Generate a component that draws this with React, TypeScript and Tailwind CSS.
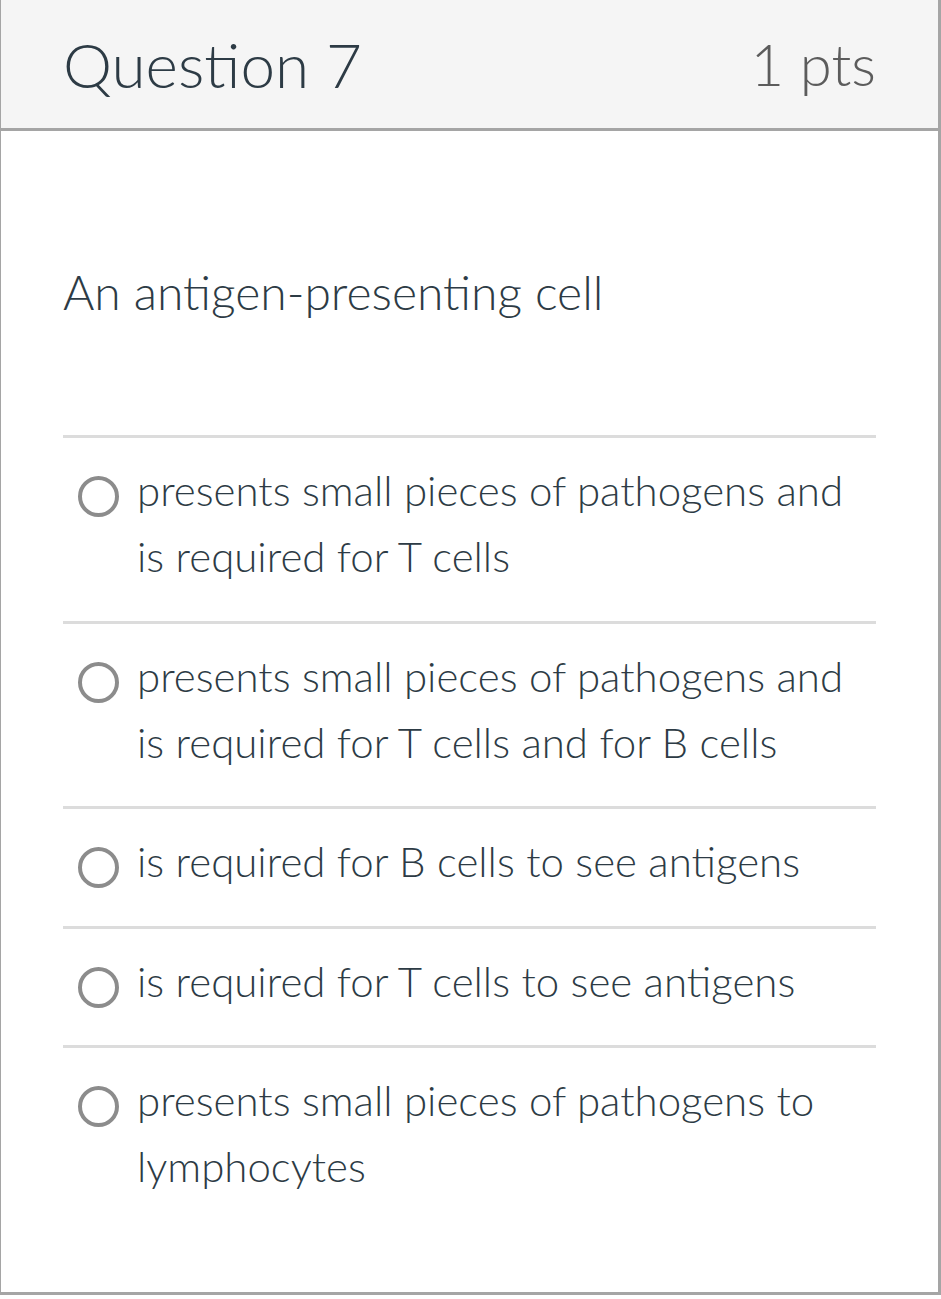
import React from 'react';

const answers = [
  'presents small pieces of pathogens and is required for T cells',
  'presents small pieces of pathogens and is required for T cells and for B cells',
  'is required for B cells to see antigens',
  'is required for T cells to see antigens',
  'presents small pieces of pathogens to lymphocytes',
];

export default function App() {
  return (
    <div
      className="w-[941px] h-[1295px] bg-white text-[#2d3b45] font-light flex flex-col border-l border-r-[3px] border-b-[3px] border-[#a5a5a5]"
      style={{ fontFamily: 'Lato, "Open Sans", sans-serif' }}
    >
      {/* Header */}
      <div className="h-[131px] shrink-0 bg-[#f5f5f5] border-b-[3px] border-[#a5a5a5] flex items-center justify-between pl-[62px] pr-[62px]">
        <span className="text-[62px] leading-none">Question 7</span>
        <span className="text-[58px] leading-none text-[#5c5c5c]">1 pts</span>
      </div>

      {/* Body */}
      <div className="px-[62px] pt-[128px]">
        <p className="text-[48px] leading-[66px]">An antigen-presenting cell</p>

        <div className="mt-[110px]">
          {answers.map((a) => (
            <div key={a} className="border-t-[3px] border-[#dcdcdc] pt-[19px] pb-[31.5px] flex items-start">
              <span className="ml-[15px] mt-[19px] w-[41px] h-[41px] shrink-0 rounded-full border-[4px] border-[#8c8c8c]" />
              <span className="ml-[18px] text-[42px] leading-[66px] pr-[20px]">{a}</span>
            </div>
          ))}
        </div>
      </div>
    </div>
  );
}
